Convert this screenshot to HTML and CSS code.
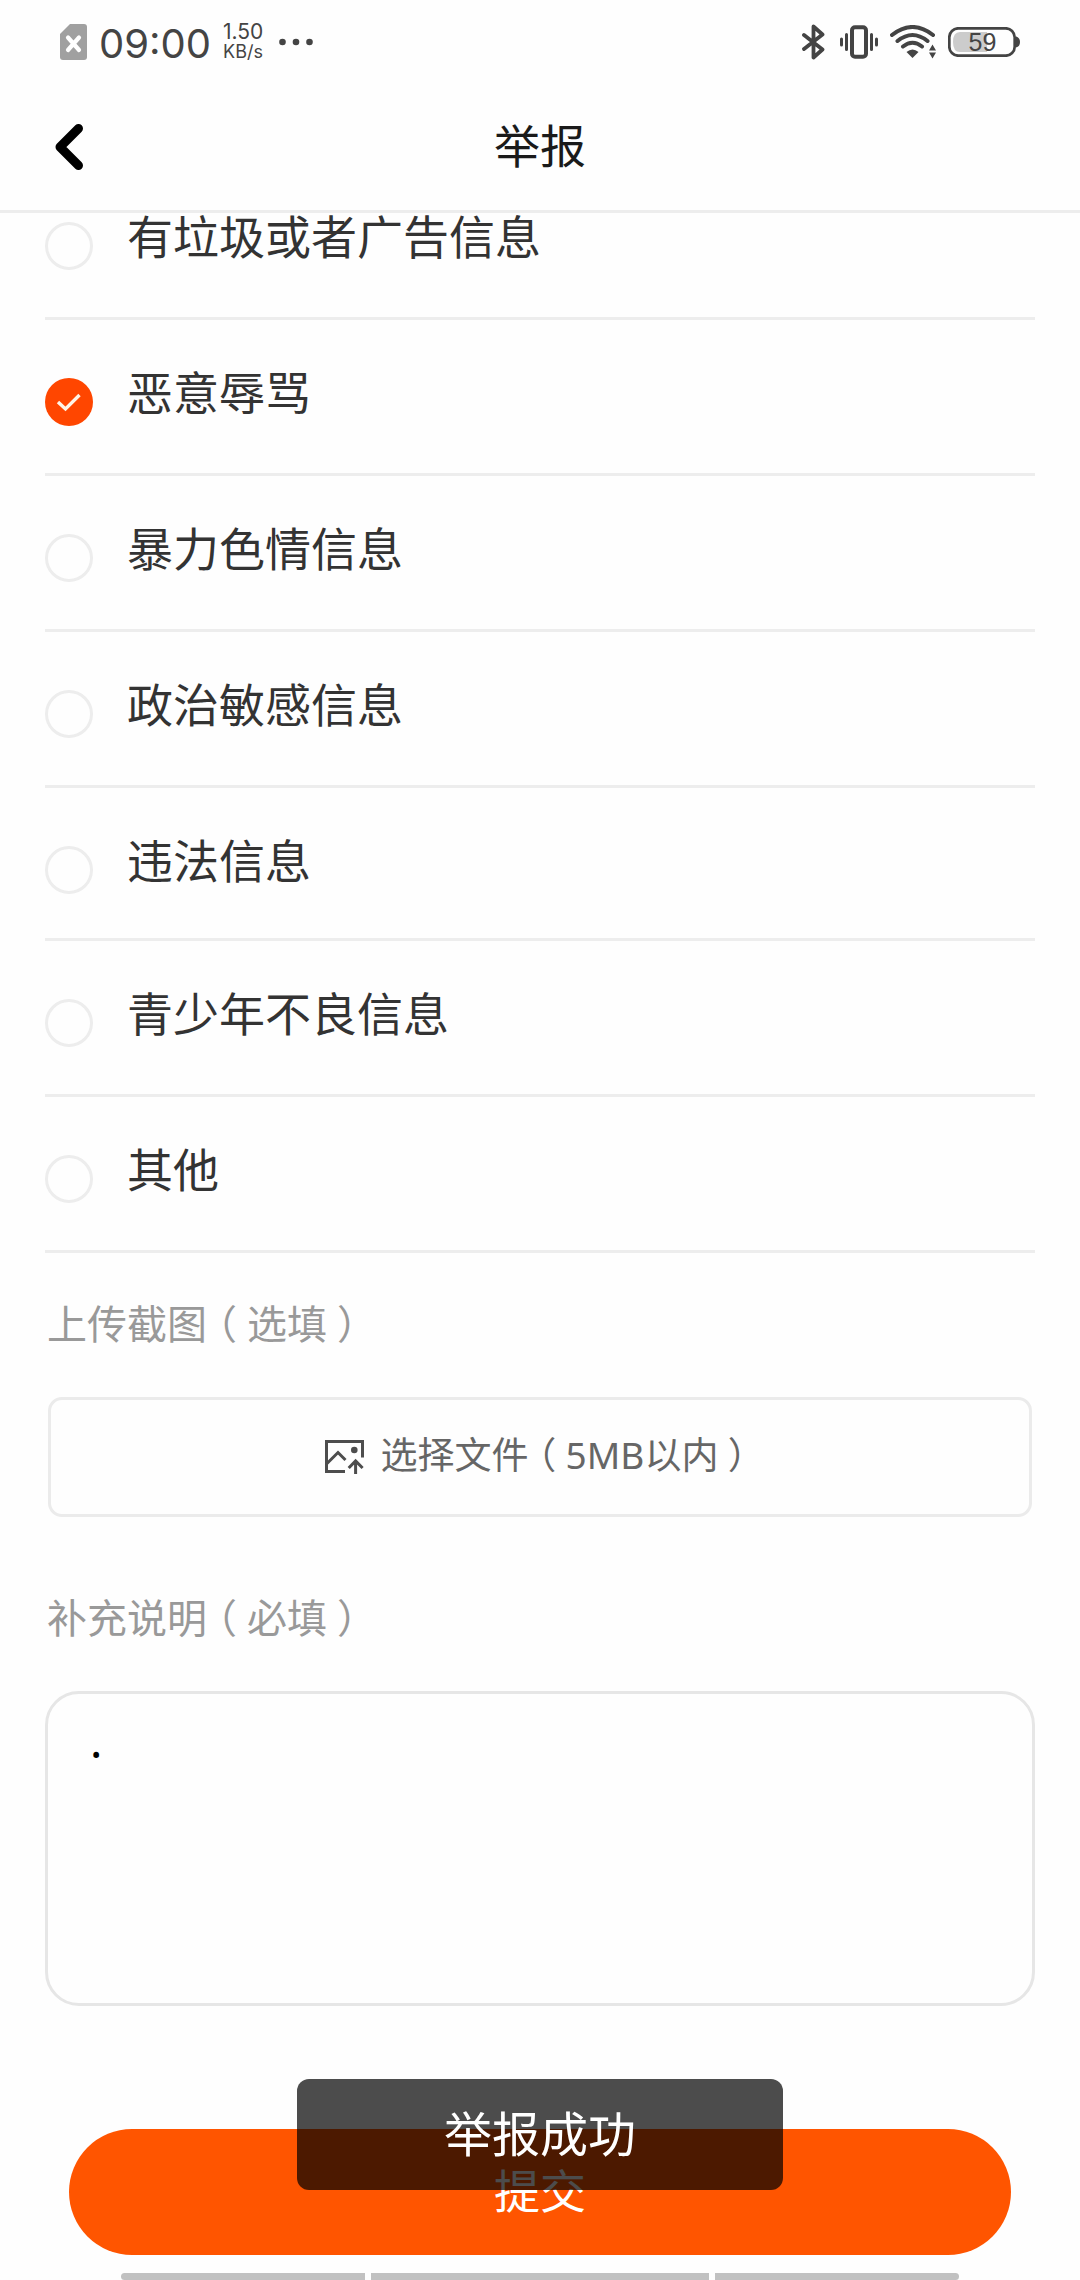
FILE: index.html
```html
<!DOCTYPE html>
<html lang="zh-CN">
<head>
<meta charset="utf-8">
<meta name="viewport" content="width=device-width, initial-scale=1">
<title>举报</title>
<link rel="stylesheet" href="styles.css">
</head>
<body>
<div class="top">
  <div class="status">
    <div class="status-group">
      <svg width="27" height="36" viewBox="0 0 27 36" aria-hidden="true"><path d="M10 0H24a3 3 0 0 1 3 3V33a3 3 0 0 1-3 3H3a3 3 0 0 1-3-3V10Z" fill="#a0a0a0"/><path d="M8 13.500L19 26M19 13.500L8 26" stroke="#fff" stroke-width="4.200" stroke-linecap="round"/></svg>
      <span class="clock">09:00</span>
      <span class="speed"><span class="speed-value">1.50</span><span class="speed-unit">KB/s</span></span>
      <svg width="34" height="8" viewBox="0 0 34 8" fill="#444" aria-hidden="true"><circle cx="3.500" cy="4" r="3.300"/><circle cx="17" cy="4" r="3.300"/><circle cx="30.500" cy="4" r="3.300"/></svg>
    </div>
    <div class="status-group">
      <svg width="26" height="36" viewBox="0 0 26 36" fill="none" stroke="#444" stroke-width="3.800" stroke-linejoin="round" stroke-linecap="round" aria-hidden="true"><path d="M2 11L20.500 25.500L11.500 33.500V2.500L20.500 10.500L2 25"/></svg>
      <svg width="38" height="34" viewBox="0 0 38 34" fill="none" stroke="#444" aria-hidden="true"><rect x="12" y="2.200" width="14" height="29.600" rx="3" stroke-width="4"/><path d="M6.500 9.500V24.500M31.500 9.500V24.500M1.500 14V20M36.500 14V20" stroke-width="3" stroke-linecap="round"/></svg>
      <svg width="46" height="34" viewBox="0 0 46 34" fill="none" stroke="#444" stroke-width="4" stroke-linecap="round" aria-hidden="true"><path d="M2 10Q22.500 -6 43 10M7.500 16Q22.500 4 37.500 16M13 21.500Q22.500 14 32 21.500"/><path d="M16.500 27Q22.500 22 28.500 27L22.500 33Z" fill="#444" stroke="none"/><path d="M39 25.500L42.500 19.500L46 25.500ZM39 27.500H46L42.500 33.500Z" fill="#444" stroke="none"/></svg>
      <svg width="72" height="30" viewBox="0 0 72 30" aria-hidden="true"><path d="M12 5H39V25H12Q5 25 5 15T12 5Z" fill="#ccc"/><rect x="1.300" y="1.300" width="65.400" height="27.400" rx="9" fill="none" stroke="#444" stroke-width="2.700"/><path d="M68 9.500Q72 10.500 72 15T68 20.500Z" fill="#444"/><text class="battery-text" x="34.500" y="24" text-anchor="middle">59</text></svg>
    </div>
  </div>
  <header class="header">
    <button class="back" type="button" aria-label="返回"><svg width="28" height="46" viewBox="0 0 28 46" fill="none" stroke="#000" stroke-width="9" stroke-linecap="round" stroke-linejoin="round"><path d="M23.500 4.500L5 23L23.500 41.500"/></svg></button>
    <h1 class="title">举报</h1>
  </header>
</div>

<form class="form">
  <div class="reasons" role="radiogroup" aria-label="举报">
    <label class="reason"><input class="radio" type="radio" name="reason"><span>有垃圾或者广告信息</span></label>
    <label class="reason"><input class="radio" type="radio" name="reason" checked><span>恶意辱骂</span></label>
    <label class="reason"><input class="radio" type="radio" name="reason"><span>暴力色情信息</span></label>
    <label class="reason"><input class="radio" type="radio" name="reason"><span>政治敏感信息</span></label>
    <label class="reason"><input class="radio" type="radio" name="reason"><span>违法信息</span></label>
    <label class="reason"><input class="radio" type="radio" name="reason"><span>青少年不良信息</span></label>
    <label class="reason"><input class="radio" type="radio" name="reason"><span>其他</span></label>
  </div>

  <div class="field">
    <label class="field-label" for="file">上传截图<span class="paren">（</span>选填<span class="paren">）</span></label>
    <button class="upload" id="file" type="button">
      <svg width="40" height="34" viewBox="0 0 40 34" fill="none" stroke="#4d4d4d" stroke-width="3" aria-hidden="true"><path d="M20 31.500H1.500V1.500H37.500V17.500M1.500 24L13 12.500L20.500 20M30.600 34V21.500M23.700 28L30.600 21L37.600 28"/><circle cx="29.300" cy="10" r="3.300" fill="#4d4d4d" stroke="none"/></svg>
      <span class="upload-text">选择文件<span class="paren">（</span>5MB以内<span class="paren">）</span></span>
    </button>
  </div>

  <div class="field field-note">
    <label class="field-label" for="note">补充说明<span class="paren">（</span>必填<span class="paren">）</span></label>
    <textarea class="note" id="note">.</textarea>
  </div>

  <button class="submit" type="submit">提交</button>
</form>

<div class="nav" aria-hidden="true"><span class="nav-bar"></span><span class="nav-bar"></span><span class="nav-bar"></span></div>
<div class="toast" role="status">举报成功</div>
</body>
</html>
```
FILE: styles.css
```css
* {
  box-sizing: border-box;
}

body {
  margin: 0;
  background: #fefefe;
  color: #333;
  font-family: "Noto Sans", "Noto Sans CJK SC", sans-serif;
  font-size: 46px;
  line-height: 60px;
}

button,
textarea {
  font: inherit;
}

svg {
  display: block;
  flex: none;
}

.top {
  position: sticky;
  top: 0;
  z-index: 1;
  background: #fefefe;
  border-bottom: 3px solid #ededed;
}

.status {
  display: flex;
  justify-content: space-between;
  padding: 24px 60px 22px;
  color: #444;
  font-family: Inter, sans-serif;
}

.status-group {
  display: flex;
  align-items: center;
  gap: 12px;
  height: 36px;
}

.clock {
  padding-top: 4px;
  font-size: 40px;
  line-height: 40px;
}

.speed {
  display: flex;
  flex-direction: column;
  margin-right: 4px;
}

.speed-value {
  font-size: 21px;
  line-height: 20px;
}

.speed-unit {
  font-size: 18px;
  line-height: 20px;
}

.battery-text {
  fill: #444;
  font-family: "Liberation Sans", sans-serif;
  font-size: 25px;
}

.header {
  display: grid;
  grid-template-columns: 1fr auto 1fr;
  align-items: center;
  padding: 33px 55px 31px;
}

.back {
  display: flex;
  justify-self: start;
  padding: 0;
  border: 0;
  background: none;
}

.title {
  margin: 0;
  padding-bottom: 4px;
  color: #1a1a1a;
  font-size: 46px;
  font-weight: 400;
}

/* The list is scrolled partly under the header. */
.form {
  display: flex;
  flex-direction: column;
  margin-top: -49px;
  padding: 0 45px;
}

.reasons {
  display: grid;
  grid-template-rows: repeat(4, 156px) 153px repeat(2, 156px);
}

.reason {
  display: flex;
  align-items: flex-start;
  gap: 34px;
  padding-top: 42px;
  border-bottom: 3px solid #ededed;
}

.radio {
  appearance: none;
  flex: none;
  width: 48px;
  height: 48px;
  margin: 16px 0 0;
  border: 3px solid #ededed;
  border-radius: 50%;
}

.radio:checked {
  border: 0;
  background: #ff4600 url("data:image/svg+xml,%3Csvg xmlns='http://www.w3.org/2000/svg' viewBox='0 0 48 48'%3E%3Cpath d='M13 24L20.500 31L34.500 17' fill='none' stroke='%23fff4e6' stroke-width='3.400'/%3E%3C/svg%3E");
}

.field {
  display: flex;
  flex-direction: column;
  gap: 43px;
  margin-top: 41px;
}

.field-note {
  margin-top: 71px;
}

.field-label {
  padding-left: 2px;
  color: #999;
  font-size: 40px;
}

/* Full-width brackets with the ink centred in the character cell. */
.paren {
  margin: 0 0.25em;
  font-feature-settings: "halt";
}

.upload {
  display: flex;
  align-items: center;
  justify-content: center;
  gap: 16px;
  height: 120px;
  margin: 0 3px;
  padding: 0;
  border: 3px solid #ebebeb;
  border-radius: 14px;
  background: none;
  color: #666;
  font-size: 37px;
}

.upload-text {
  padding-bottom: 4px;
}

.note {
  display: block;
  width: 100%;
  height: 315px;
  padding: 16px 42px;
  border: 3px solid #e6e6e6;
  border-radius: 34px;
  outline: 0;
  background: none;
  color: #000;
  resize: none;
}

.submit {
  height: 126px;
  margin: 123px 24px 0;
  padding: 0 0 4px;
  border: 0;
  border-radius: 63px;
  background: #ff5500;
  color: #fff;
}

.nav {
  display: grid;
  grid-template-columns: 244fr 338fr 244fr;
  gap: 6px;
  margin-top: 18px;
  padding: 0 121px;
}

.nav-bar {
  height: 7px;
  background: #c1c1c1;
}

.nav-bar:first-child {
  border-radius: 4px 0 0 4px;
}

.nav-bar:last-child {
  border-radius: 0 4px 4px 0;
}

.toast {
  position: fixed;
  bottom: 90px;
  left: 50%;
  z-index: 2;
  min-width: 45%;
  padding: 25px 48px 26px;
  border-radius: 12px;
  background: rgba(0, 0, 0, 0.7);
  color: #fff;
  font-size: 48px;
  text-align: center;
  transform: translateX(-50%);
}
```
